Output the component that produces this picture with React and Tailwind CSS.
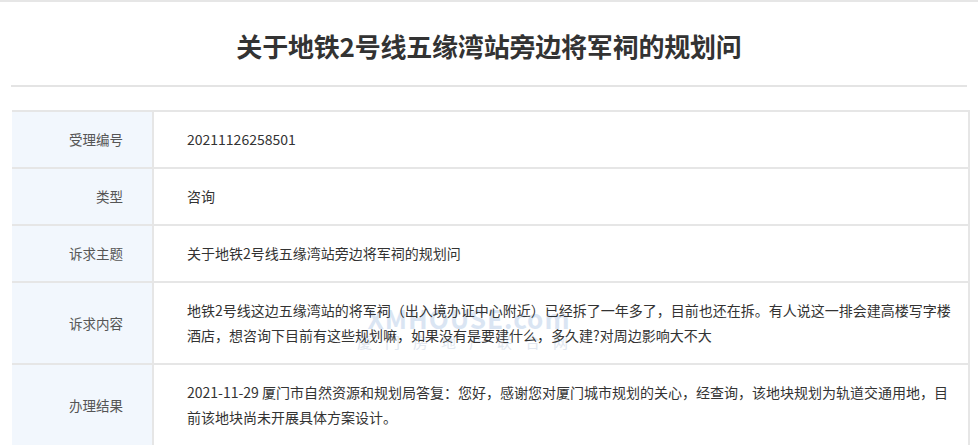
const rows = [
  { label: '受理编号', value: '20211126258501' },
  { label: '类型', value: '咨询' },
  { label: '诉求主题', value: '关于地铁2号线五缘湾站旁边将军祠的规划问' },
  {
    label: '诉求内容',
    value: '地铁2号线这边五缘湾站的将军祠（出入境办证中心附近）已经拆了一年多了，目前也还在拆。有人说这一排会建高楼写字楼酒店，想咨询下目前有这些规划嘛，如果没有是要建什么，多久建?对周边影响大不大',
    mark: true,
  },
  {
    label: '办理结果',
    value: '2021-11-29 厦门市自然资源和规划局答复：您好，感谢您对厦门城市规划的关心，经查询，该地块规划为轨道交通用地，目前该地块尚未开展具体方案设计。',
  },
]

function Watermark() {
  return (
    <div className="pointer-events-none absolute left-[203px] top-[22px] flex flex-col items-center select-none">
      <div className="text-[26px] font-bold leading-[26px] tracking-[1px] text-[#dae5f3]">XMHOUSE.com</div>
      <div className="mt-[3px] text-[15px] leading-[16px] tracking-[13px] text-[#e2e8f1]">厦门房地产联合网</div>
    </div>
  )
}

export default function App() {
  return (
    <div className="min-h-[445px] bg-white font-['Microsoft_YaHei','Noto_Sans_CJK_SC',sans-serif] border-t-2 border-[#e6e6e6]">
      <div className="mx-[11px] h-[85px] border-b-2 border-[#e4e4e4] flex items-center justify-center">
        <h1 className="text-[26px] font-bold text-[#333] tracking-[-0.2px] pt-[4px]">
          关于地铁2号线五缘湾站旁边将军祠的规划问
        </h1>
      </div>

      <div className="mx-[12px] mr-[8px] mt-[23px] border-t-2 border-r-2 border-[#e6e6e6]">
        {rows.map(r => (
          <div key={r.label} className="flex border-b-2 border-[#e6e6e6]">
            <div className="w-[142px] shrink-0 bg-[#f2f7fd] border-r-2 border-[#e6e6e6] flex items-center justify-end pr-[29px] text-[13.5px] text-[#555]">
              {r.label}
            </div>
            <div className="relative flex-1 py-[15px] pl-[33px] pr-[10px] text-[14px] leading-[25px] text-[#333]">
              {r.mark && <Watermark />}
              <span className="relative">{r.value}</span>
            </div>
          </div>
        ))}
      </div>
    </div>
  )
}
